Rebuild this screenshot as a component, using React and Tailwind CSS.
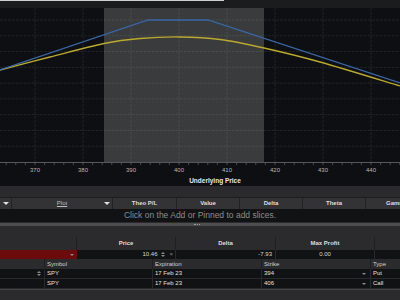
const FONT = { fontFamily: '"Liberation Sans", Arial, sans-serif' };

const TICKS = [370, 380, 390, 400, 410, 420, 430, 440];

function smoothPath(pts) {
  // catmull-rom to cubic bezier
  let d = `M${pts[0][0]},${pts[0][1]}`;
  for (let i = 0; i < pts.length - 1; i++) {
    const p0 = pts[i - 1] || pts[i];
    const p1 = pts[i];
    const p2 = pts[i + 1];
    const p3 = pts[i + 2] || p2;
    const c1 = [p1[0] + (p2[0] - p0[0]) / 6, p1[1] + (p2[1] - p0[1]) / 6];
    const c2 = [p2[0] - (p3[0] - p1[0]) / 6, p2[1] - (p3[1] - p1[1]) / 6];
    d += ` C${c1[0]},${c1[1]} ${c2[0]},${c2[1]} ${p2[0]},${p2[1]}`;
  }
  return d;
}

const yellow = [
  [0, 70],
  [50, 57],
  [104, 43.5],
  [140, 38.5],
  [180, 37],
  [220, 39.5],
  [264, 48],
  [320, 62],
  [400, 86],
];

function Chart() {
  const hLines = Array.from({ length: 9 }, (_, i) => 20 + i * 15.78);
  const minor = Array.from({ length: 45 }, (_, i) => 35 - 48 + i * 9.6);
  return (
    <svg width="400" height="178" viewBox="0 8 400 178" className="block">
      <rect x="0" y="8" width="400" height="178" fill="#0e0f12" />
      <rect x="104" y="8" width="160" height="154" fill="#3a3b3d" />
      {hLines.map((y) => (
        <line key={y} x1="0" x2="400" y1={y} y2={y} stroke="#ffffff" strokeOpacity="0.08" strokeDasharray="3 1" />
      ))}
      {TICKS.map((t, i) => (
        <line key={t} x1={35 + i * 48} x2={35 + i * 48} y1="8" y2="162" stroke="#ffffff" strokeOpacity="0.08" strokeDasharray="3 1" />
      ))}
      <line x1="0" x2="400" y1="162.5" y2="162.5" stroke="#55575a" />
      {minor.map((x) => (
        <line key={x} x1={x} x2={x} y1="163" y2="165" stroke="#4a4c50" />
      ))}
      <path d={smoothPath(yellow)} fill="none" stroke="#b9a92c" strokeWidth="1.3" />
      <polyline points="0,70 148,20 208,20 400,83" fill="none" stroke="#3767a8" strokeWidth="1.3" />
      {TICKS.map((t, i) => (
        <text key={t} x={35 + i * 48} y="172" fontSize="6" fill="#b8b8b8" textAnchor="middle" style={FONT}>
          {t}
        </text>
      ))}
      <text x="215" y="182.5" fontSize="6.5" fontWeight="bold" fill="#e8e8e8" textAnchor="middle" style={FONT}>
        Underlying Price
      </text>
    </svg>
  );
}

function Tri({ className = "" }) {
  return <span className={`inline-block h-0 w-0 border-x-[3px] border-t-[3px] border-x-transparent border-t-[#e0e0e0] ${className}`} />;
}

function Spin() {
  return (
    <span className="flex flex-col items-center gap-[1px]">
      <span className="h-0 w-0 border-x-[2px] border-b-[2px] border-x-transparent border-b-[#8a8a8a]" />
      <span className="h-0 w-0 border-x-[2px] border-t-[2px] border-x-transparent border-t-[#8a8a8a]" />
    </span>
  );
}

function SmallArrow() {
  return <span className="h-0 w-0 border-x-[2px] border-t-[2px] border-x-transparent border-t-[#8a8a8a]" />;
}

const sliceCols = [
  { w: "w-[101px]", label: "Plot" },
  { w: "w-[64px]", label: "Theo P/L" },
  { w: "w-[63px]", label: "Value" },
  { w: "w-[63px]", label: "Delta" },
  { w: "w-[63px]", label: "Theta" },
  { w: "w-[63px]", label: "Gamma" },
];

const legs = [
  { strike: "394", type: "Put", spin: true },
  { strike: "406", type: "Call", spin: false },
];

export default function App() {
  return (
    <div className="flex h-[300px] w-[400px] flex-col overflow-hidden bg-[#2b2b2d] text-[6px]" style={FONT}>
      <div className="flex h-[1px] shrink-0">
        <div className="w-[224px] bg-[#cfcfcf]" />
        <div className="flex-1 bg-[#1b1c1e]" />
      </div>
      <div className="h-[7px] shrink-0 bg-[#1b1c1e]" />
      <Chart />

      <div className="h-[11px] shrink-0" />

      {/* slices header */}
      <div className="flex h-[12px] shrink-0 items-center border-t border-[#1e1e20] bg-[#333335] font-bold text-[#dedede]">
        <div className="flex h-full w-[12px] shrink-0 items-center justify-center border-r border-[#222224]">
          <Tri />
        </div>
        {sliceCols.map((c, i) => (
          <div key={c.label} className={`relative flex h-full ${c.w} shrink-0 items-center justify-center border-r border-[#222224]`}>
            {i === 0 ? (
              <>
                <span className="font-normal text-[#bdbdbd] underline">{c.label}</span>
                <Tri className="absolute right-[2px] top-[4px]" />
              </>
            ) : (
              c.label
            )}
          </div>
        ))}
      </div>
      <div className="flex h-[13px] shrink-0 items-center justify-center bg-[#111214] text-[8.5px] text-[#8c8c8c]">
        Click on the Add or Pinned to add slices.
      </div>
      <div className="h-[1px] shrink-0" />
      <div className="relative h-[3px] shrink-0 bg-[#4e4e50]">
        <div className="absolute left-[194px] top-[1px] h-[1px] w-[6px] border-t border-dotted border-[#9a9a9a]" />
      </div>
      <div className="h-[11px] shrink-0" />

      {/* position summary */}
      <div className="flex h-[13px] shrink-0 items-center font-bold text-[#dedede]">
        <div className="h-full w-[77px] shrink-0 border-r border-[#1f1f21]" />
        <div className="flex h-full w-[99px] shrink-0 items-center justify-center border-r border-[#1f1f21]">Price</div>
        <div className="flex h-full w-[100px] shrink-0 items-center justify-center border-r border-[#1f1f21]">Delta</div>
        <div className="flex h-full w-[99px] shrink-0 items-center justify-center border-r border-[#1f1f21]">Max Profit</div>
      </div>
      <div className="flex h-[9px] shrink-0 items-center bg-[#111214] text-[#d8d8d8]">
        <div className="flex h-full w-[77px] shrink-0 items-center justify-end bg-[#6c0b0b] pr-[3px]">
          <SmallArrow />
        </div>
        <div className="flex h-full w-[99px] shrink-0 items-center justify-end gap-[4px] border-r border-[#2a2a2c] pr-[2px]">
          <span>10.46</span>
          <Spin />
          <span className="text-[#8a8a8a]">×</span>
        </div>
        <div className="flex h-full w-[100px] shrink-0 items-center justify-end border-r border-[#2a2a2c] pr-[3px]">-7.93</div>
        <div className="flex h-full w-[99px] shrink-0 items-center justify-center border-r border-[#2a2a2c]">0.00</div>
      </div>

      {/* legs */}
      <div className="flex h-[10px] shrink-0 items-center text-[#cfcfcf]">
        <div className="h-full w-[45px] shrink-0 border-r border-[#1f1f21]" />
        <div className="flex h-full w-[108px] shrink-0 items-center border-r border-[#1f1f21] pl-[2px]">Symbol</div>
        <div className="flex h-full w-[109px] shrink-0 items-center border-r border-[#1f1f21] pl-[2px]">Expiration</div>
        <div className="flex h-full w-[109px] shrink-0 items-center border-r border-[#1f1f21] pl-[2px]">Strike</div>
        <div className="flex h-full flex-1 items-center pl-[2px]">Type</div>
      </div>
      {legs.map((l) => (
        <div key={l.strike} className="flex h-[10px] shrink-0 items-center border-b border-[#29292b] bg-[#111214] text-[#e0e0e0]">
          <div className="flex h-full w-[45px] shrink-0 items-center justify-end border-r border-[#29292b] pr-[3px]">
            {l.spin && <Spin />}
          </div>
          <div className="flex h-full w-[108px] shrink-0 items-center border-r border-[#29292b] pl-[2px]">SPY</div>
          <div className="flex h-full w-[109px] shrink-0 items-center border-r border-[#29292b] pl-[2px]">17 Feb 23</div>
          <div className="flex h-full w-[109px] shrink-0 items-center justify-between border-r border-[#29292b] pl-[2px] pr-[4px]">
            <span>{l.strike}</span>
            <SmallArrow />
          </div>
          <div className="flex h-full flex-1 items-center pl-[2px]">{l.type}</div>
        </div>
      ))}
      <div className="h-[1px] shrink-0 bg-[#444446]" />
      <div className="flex-1" />
    </div>
  );
}
